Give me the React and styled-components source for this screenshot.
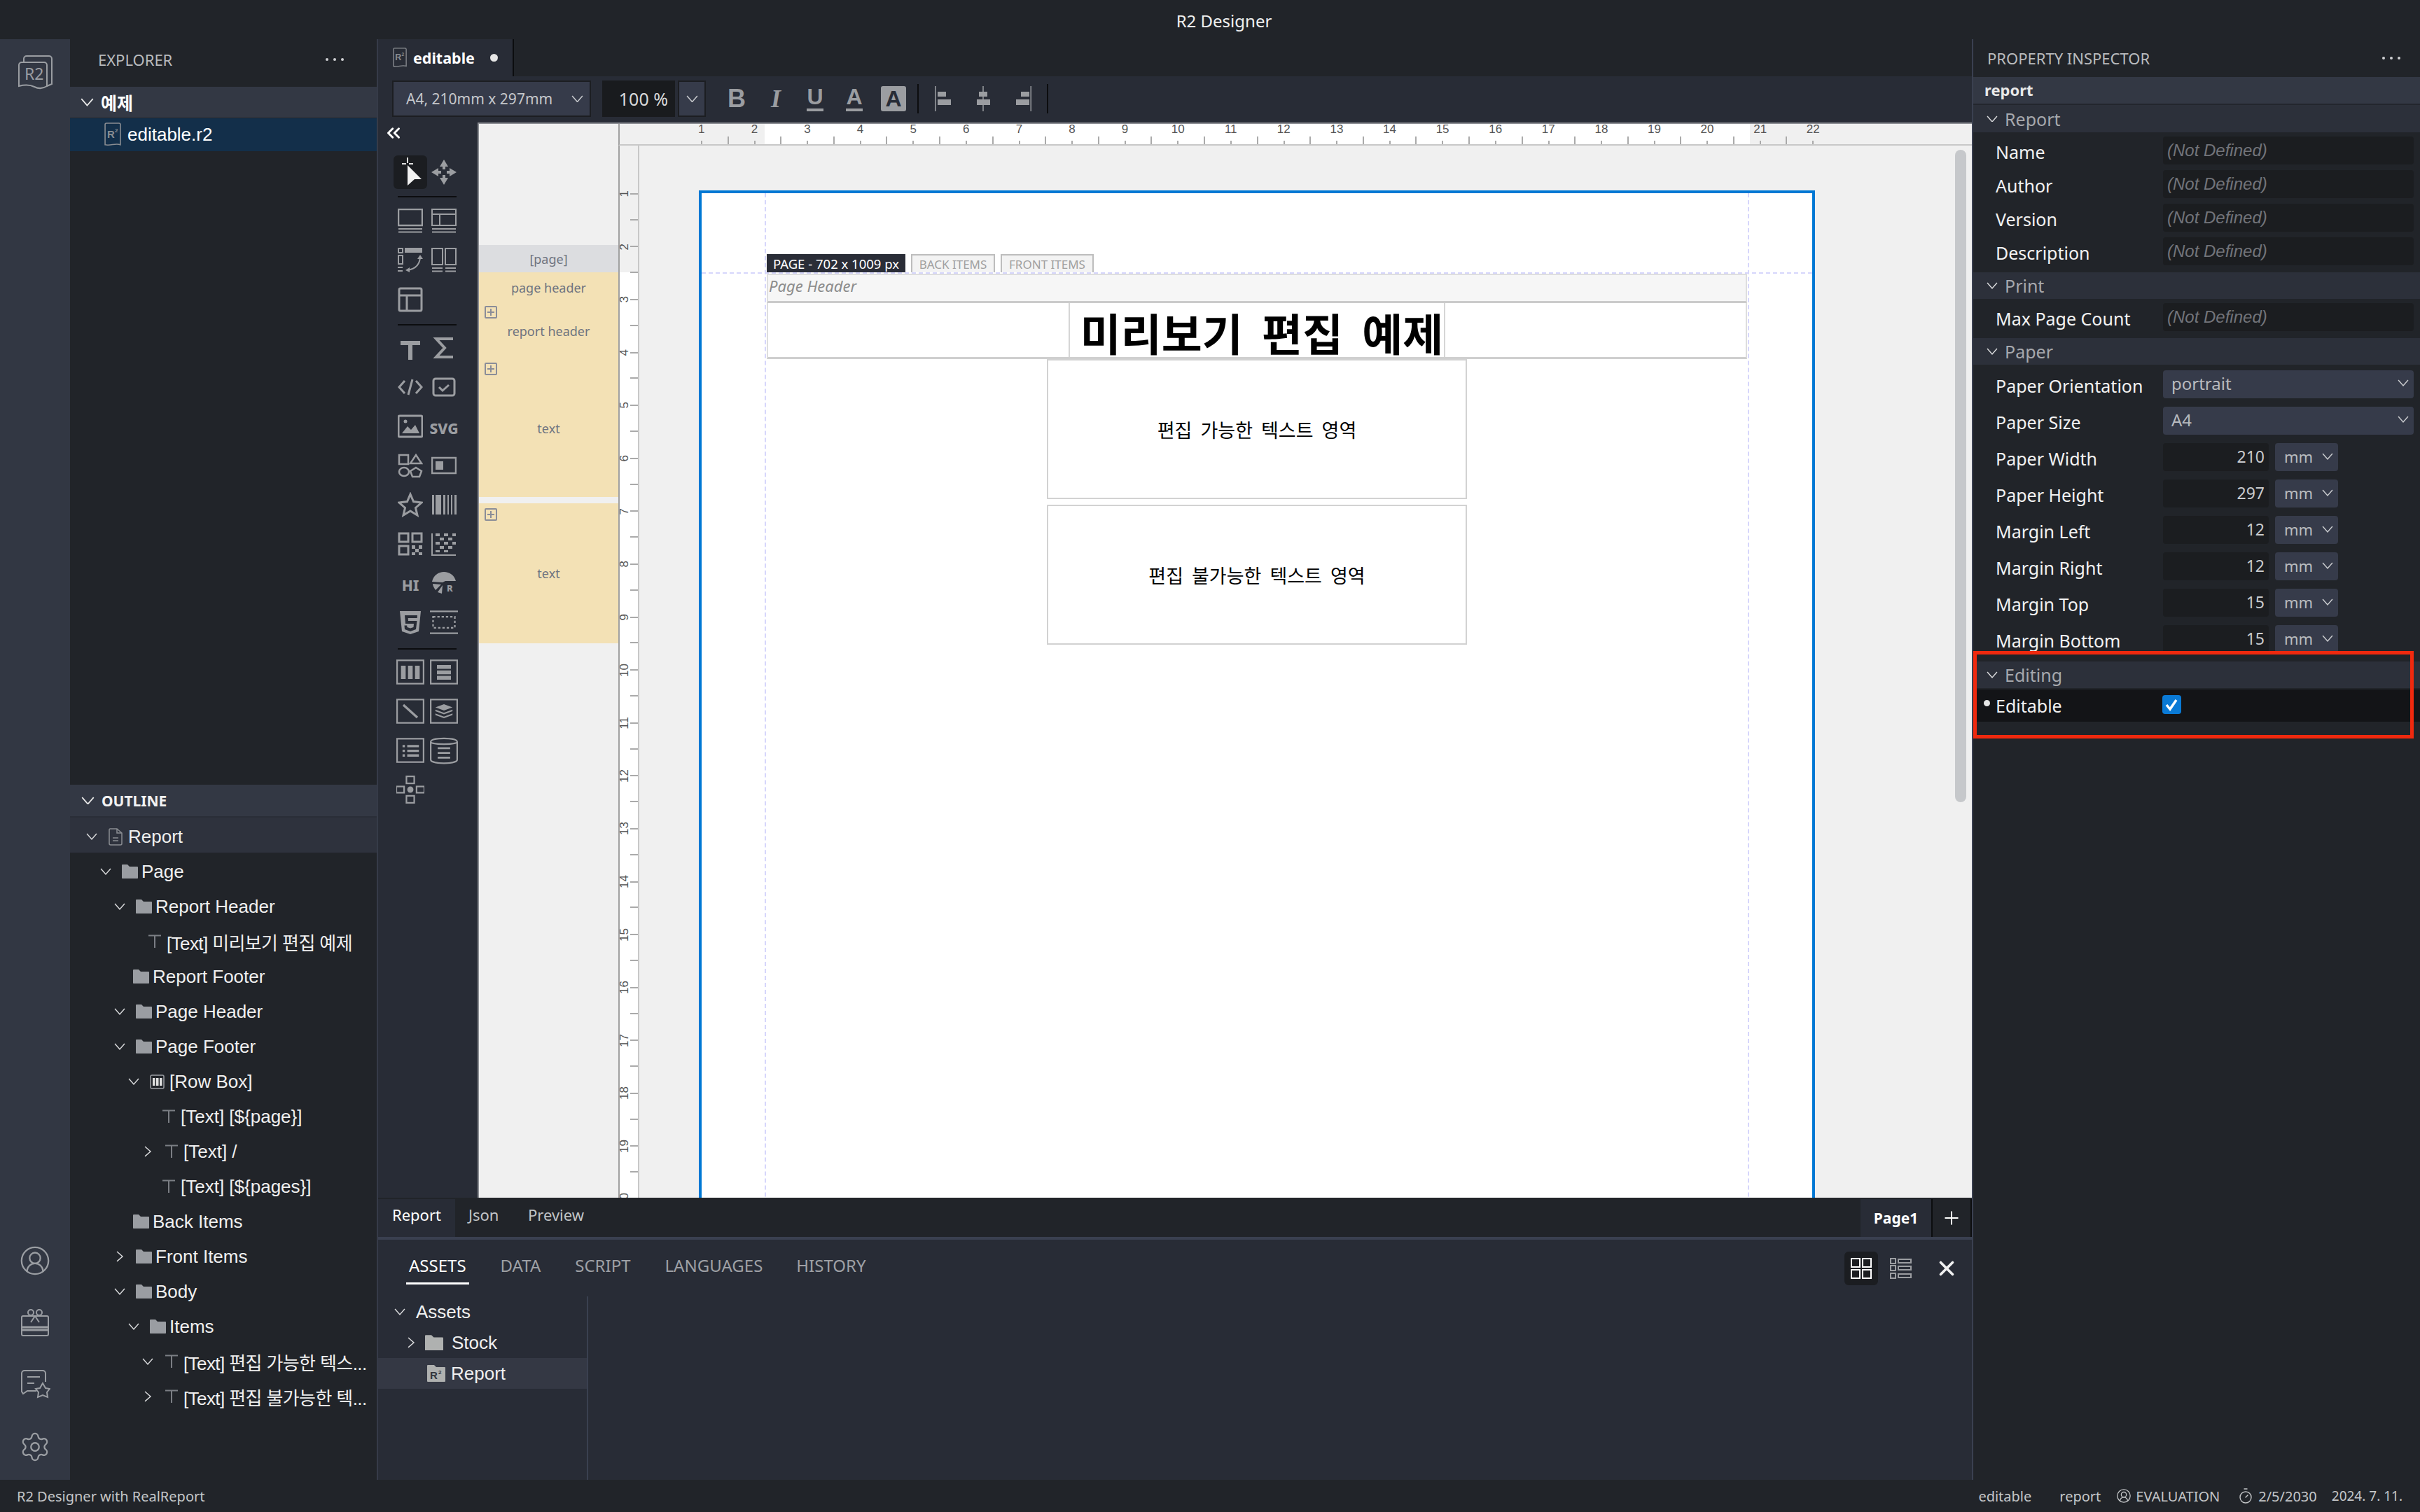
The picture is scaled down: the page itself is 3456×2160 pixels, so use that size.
import React from "react";
import styled, { createGlobalStyle } from "styled-components";
import { CircleUserRound, Settings, Plus, X, Timer, ChevronsLeft } from "lucide-react";

const UI = `"Noto Sans", "Noto Sans CJK KR", sans-serif`;
const TREE = `"Liberation Sans", "Noto Sans CJK KR", sans-serif`;
const GRAY = "#9b9da1";

const Global = createGlobalStyle`
  html, body { margin: 0; padding: 0; background: #212429; }
  * { box-sizing: border-box; }
`;

const App_ = styled.div`
  width: 3456px;
  height: 2160px;
  display: flex;
  flex-direction: column;
  overflow: hidden;
  background: #212429;
  font-family: ${UI};
  color: #eee;
`;

const TitleBar = styled.div`
  height: 56px;
  flex-shrink: 0;
  display: flex;
  align-items: center;
  justify-content: center;
  padding: 3px 0 0 40px;
  font-size: 24px;
  color: #f0f0f0;
`;

const Middle = styled.div`
  flex: 1;
  display: flex;
  min-height: 0;
`;

const ActivityBar = styled.div`
  width: 100px;
  flex-shrink: 0;
  background: #323743;
  display: flex;
  flex-direction: column;
  justify-content: space-between;
  align-items: center;
  padding: 22px 0 24px;
  color: #9a9da2;
`;

const ActivityGroup = styled.div`
  display: flex;
  flex-direction: column;
  align-items: center;
  gap: 46px;
`;

const Explorer = styled.div`
  width: 440px;
  flex-shrink: 0;
  display: flex;
  flex-direction: column;
  border-right: 2px solid #363b48;
`;

const PanelHead = styled.div`
  height: ${(p) => p.$h}px;
  flex-shrink: 0;
  display: flex;
  align-items: center;
  justify-content: space-between;
  padding: ${(p) => p.$pad};
  font-size: 22px;
  color: #b9bbbe;
`;

const Dots = styled.div`
  display: flex;
  gap: 7px;
  i {
    width: 4px;
    height: 4px;
    border-radius: 50%;
    background: #cfd0d3;
  }
`;

const FolderHead = styled.div`
  height: 45px;
  flex-shrink: 0;
  background: #333844;
  border-bottom: 1px solid #23262d;
  display: flex;
  align-items: center;
  padding-left: 15px;
  gap: 10px;
  font-size: 25px;
  font-weight: 700;
  font-family: "Noto Sans CJK KR", sans-serif;
  color: #fff;
`;

const FileRow = styled.div`
  height: 47px;
  flex-shrink: 0;
  background: #132f4a;
  display: flex;
  align-items: center;
  padding-left: 49px;
  gap: 9px;
  font-family: ${TREE};
  font-size: 26px;
  color: #fff;
`;

const FilesArea = styled.div`
  flex: 1;
`;

const OutlineHead = styled.div`
  height: 47px;
  flex-shrink: 0;
  background: #333844;
  border-bottom: 2px solid #2a2e37;
  display: flex;
  align-items: center;
  padding-left: 16px;
  gap: 10px;
  font-size: 21px;
  font-weight: 700;
  color: #f2f2f2;
`;

const OutlineArea = styled.div`
  height: 946px;
  flex-shrink: 0;
`;

const TreeRow = styled.div`
  height: 50px;
  display: flex;
  align-items: center;
  padding: 4px 0 0 ${(p) => p.$x}px;
  background: ${(p) => (p.$top ? "#2e323d" : "transparent")};
  font-family: ${TREE};
  font-size: 26px;
  letter-spacing: ${(p) => (p.$ko ? "-0.6px" : "0")};
  color: #f0f0f0;
  white-space: nowrap;
`;

const Twisty = styled.span`
  width: ${(p) => p.$w}px;
  flex-shrink: 0;
  display: flex;
  padding-left: 4px;
`;

const Glyph = styled.span`
  width: ${(p) => p.$w}px;
  flex-shrink: 0;
  display: flex;
  align-items: center;
`;

const Main = styled.div`
  flex: 1;
  min-width: 0;
  display: flex;
  flex-direction: column;
`;

const EditorTabs = styled.div`
  height: 53px;
  flex-shrink: 0;
  display: flex;
`;

const EditorTab = styled.div`
  width: 194px;
  background: #282c36;
  border-right: 2px solid #0c0d0f;
  display: flex;
  align-items: center;
  padding-left: 21px;
  gap: 9px;
  font-size: 21.5px;
  font-weight: 700;
  color: #fff;
  i {
    width: 11px;
    height: 11px;
    border-radius: 50%;
    background: #e6e6e6;
    margin-left: 13px;
  }
`;

const Toolbar = styled.div`
  height: 66px;
  flex-shrink: 0;
  background: #282c36;
  display: flex;
  align-items: center;
  padding-left: 20px;
  padding-bottom: 2px;
`;

const SizeSelect = styled.div`
  width: 284px;
  height: 52px;
  background: #363b4a;
  border: 2px solid #1c1e22;
  display: flex;
  align-items: center;
  justify-content: space-between;
  padding: 0 9px 0 18px;
  font-size: 21px;
  color: #c5c7cb;
  white-space: nowrap;
`;

const ZoomInput = styled.div`
  width: 104px;
  height: 52px;
  margin-left: 16px;
  background: #191b1e;
  display: flex;
  align-items: center;
  justify-content: flex-end;
  padding-right: 10px;
  font-size: 25px;
  color: #d8d9da;
`;

const ZoomArrow = styled.div`
  width: 40px;
  height: 52px;
  margin-left: 4px;
  background: #363b4a;
  border: 2px solid #1c1e22;
  display: flex;
  align-items: center;
  justify-content: center;
`;

const FormatBtn = styled.span`
  width: 56px;
  height: 36px;
  margin-left: ${(p) => p.$ml || 0}px;
  flex-shrink: 0;
  display: flex;
  align-items: center;
  justify-content: center;
  color: ${GRAY};
  font-family: ${(p) => (p.$serif ? '"Liberation Serif", serif' : '"Liberation Sans", sans-serif')};
  font-style: ${(p) => (p.$italic ? "italic" : "normal")};
  font-weight: 700;
  font-size: 36px;
`;

const BarLetter = styled.span`
  display: inline-block;
  line-height: 30px;
  height: 36px;
  font-size: 32px;
  border-bottom: 4px solid ${GRAY};
`;

const FilledLetter = styled.span`
  width: 36px;
  height: 36px;
  background: ${GRAY};
  border-radius: 3px;
  color: #282c36;
  font-size: 32px;
  display: flex;
  align-items: center;
  justify-content: center;
`;

const ToolSep = styled.span`
  width: 2px;
  height: 42px;
  background: #0c0d0f;
  margin: ${(p) => p.$m};
  flex-shrink: 0;
`;

const Workspace = styled.div`
  flex: 1;
  min-height: 0;
  display: flex;
`;

const ToolPanel = styled.div`
  width: 142px;
  flex-shrink: 0;
  background: #282c36;
  padding: 0 0 0 22px;
`;

const Collapse = styled.div`
  height: 47px;
  display: flex;
  align-items: center;
  color: #fff;
  margin-left: -15px;
  padding-bottom: 18px;
`;

const ToolGrid = styled.div`
  display: grid;
  grid-template-columns: 48px 48px;
  grid-auto-rows: 48px;
  row-gap: 8px;
`;

const Tool = styled.span`
  display: flex;
  align-items: center;
  justify-content: center;
  border-radius: 6px;
  background: ${(p) => (p.$active ? "#1b1d21" : "transparent")};
  color: ${GRAY};
  font-family: ${UI};
  font-weight: 800;
  font-size: 21px;
`;

const ToolDivider = styled.div`
  width: 84px;
  height: 2px;
  margin: ${(p) => p.$mt}px 0 ${(p) => p.$mb}px 6px;
  background: #0c0d0f;
`;

const BandPanel = styled.div`
  width: 201px;
  flex-shrink: 0;
  background: #f0f0f0;
  border-left: 2px solid #8b8d93;
  border-top: 2px solid #8b8d93;
  padding-top: 173px;
  font-size: 18px;
  color: #6f7480;
`;

const PageBand = styled.div`
  height: 39px;
  background: #dcdde0;
  display: flex;
  align-items: center;
  justify-content: center;
`;

const Band = styled.div`
  position: relative;
  height: ${(p) => p.$h}px;
  margin-top: ${(p) => p.$gap || 0}px;
  background: #f3e1b5;
  display: flex;
  align-items: center;
  justify-content: center;
`;

const BandPlus = styled.span`
  position: absolute;
  left: 8px;
  top: ${(p) => p.$top}px;
  width: 18px;
  height: 18px;
  border: 2px solid #8a8d98;
  border-radius: 2px;
  &::before, &::after {
    content: "";
    position: absolute;
    background: #8a8d98;
  }
  &::before { left: 2px; right: 2px; top: 6px; height: 2px; }
  &::after { left: 6px; width: 2px; top: 2px; bottom: 2px; }
`;

const Canvas = styled.div`
  flex: 1;
  min-width: 0;
  position: relative;
  display: flex;
  flex-direction: column;
  overflow: hidden;
  background: #f0f0f0;
  border-top: 2px solid #8b8d93;
`;

const TopRuler = styled.div`
  height: 31px;
  flex-shrink: 0;
  display: flex;
  padding-left: 79px;
  border-bottom: 2px solid #c8c8c8;
  border-left: 2px solid #a0a0a0;
  background: linear-gradient(to right, #f0f0f0 207px, #fff 207px, #fff 1614px, #f0f0f0 1614px);
`;

const TopCell = styled.div`
  position: relative;
  width: 75.6px;
  flex-shrink: 0;
  text-align: center;
  font-family: "Liberation Sans", sans-serif;
  font-size: 17px;
  line-height: 15px;
  color: #555;
  &::before {
    content: "";
    position: absolute;
    left: 37px;
    bottom: 0;
    width: 2px;
    height: 5px;
    background: #aaa;
  }
  &::after {
    content: "";
    display: ${(p) => (p.$last ? "none" : "block")};
    position: absolute;
    right: -1px;
    bottom: 0;
    width: 2px;
    height: 11px;
    background: #aaa;
  }
`;

const CanvasBody = styled.div`
  flex: 1;
  min-height: 0;
  display: flex;
`;

const LeftRuler = styled.div`
  width: 30px;
  flex-shrink: 0;
  padding-top: 31px;
  overflow: hidden;
  border-left: 2px solid #a0a0a0;
  border-right: 2px solid #c8c8c8;
  background: linear-gradient(to bottom, #f0f0f0 181px, #fff 181px);
`;

const LeftCell = styled.div`
  height: 75.6px;
  display: flex;
  align-items: center;
  justify-content: space-between;
  font-family: "Liberation Sans", sans-serif;
  font-size: 17px;
  line-height: 14px;
  color: #555;
  background: linear-gradient(#aaa, #aaa) right 0 bottom 0 / 11px 2px no-repeat;
  span {
    writing-mode: vertical-rl;
    transform: rotate(180deg);
  }
  &::after {
    content: "";
    width: 11px;
    height: 2px;
    background: #aaa;
  }
`;

const Scroller = styled.div`
  flex: 1;
  min-width: 0;
  padding: 64px 0 0 85px;
  overflow: hidden;
`;

const Sheet = styled.div`
  position: relative;
  width: 1594px;
  height: 2300px;
  background: #fff;
  border: 4px solid #0078d4;
  padding: 87px 93px 0;
`;

const GuideV = styled.span`
  position: absolute;
  top: 0;
  bottom: 0;
  ${(p) => p.$side}: 90px;
  border-left: 2px dashed #d6d6fb;
`;

const GuideH = styled.span`
  position: absolute;
  left: 0;
  right: 0;
  top: 113px;
  border-top: 2px dashed #d6d6fb;
`;

const ItemTabs = styled.div`
  height: 26px;
  display: flex;
  gap: 8px;
`;

const ItemTab = styled.div`
  width: ${(p) => p.$w}px;
  display: flex;
  align-items: center;
  justify-content: center;
  font-size: ${(p) => (p.$dark ? 18.5 : 17)}px;
  white-space: nowrap;
  background: ${(p) => (p.$dark ? "#2a2d37" : "#f3f3f3")};
  color: ${(p) => (p.$dark ? "#fff" : "#a0a0a0")};
  border: ${(p) => (p.$dark ? "none" : "2px solid #bdbdbd")};
  border-bottom: none;
`;

const PageHeaderBand = styled.div`
  position: relative;
  height: 42px;
  margin-top: 2px;
  background: #f6f6f6;
  border: 2px solid #dedede;
  border-bottom: 3px solid #cbcbcb;
  padding-left: 1px;
  font-size: 22px;
  font-style: italic;
  line-height: 31px;
  color: #8c8c8c;
`;

const ReportHeaderBand = styled.div`
  position: relative;
  height: 80px;
  background: #fff;
  border: 2px solid #dedede;
  border-top: none;
  border-bottom: 3px solid #cfcfcf;
  padding-left: 429px;
`;

const TitleBox = styled.div`
  width: 538px;
  height: 100%;
  border: solid #d6d6d6;
  border-width: 0 2px;
  display: flex;
  align-items: center;
  justify-content: center;
  padding: 4px 0 0 14px;
  font-family: "Noto Sans CJK KR", sans-serif;
  font-size: 63px;
  font-weight: 700;
  color: #000;
  word-spacing: 13px;
  white-space: nowrap;
`;

const TextBox = styled.div`
  position: relative;
  width: 600px;
  height: 200px;
  margin: ${(p) => p.$top}px 0 0 400px;
  border: 2px solid #d2d2d2;
  background: #fff;
  display: flex;
  align-items: center;
  justify-content: center;
  font-family: "Noto Sans CJK KR", sans-serif;
  font-size: 27px;
  font-weight: 400;
  color: #000;
  word-spacing: 6px;
`;

const ScrollThumb = styled.span`
  position: absolute;
  right: 8px;
  top: 37px;
  width: 16px;
  height: 932px;
  border-radius: 8px;
  background: #c6c8cb;
`;

const SheetTabs = styled.div`
  height: 56px;
  flex-shrink: 0;
  display: flex;
  align-items: flex-end;
  background: #212429;
`;

const SheetTab = styled.div`
  height: 54px;
  display: flex;
  align-items: center;
  padding-left: ${(p) => p.$pl}px;
  width: ${(p) => p.$w}px;
  background: ${(p) => (p.$active ? "#282c36" : "transparent")};
  color: ${(p) => (p.$active ? "#fff" : "#c2c4c7")};
  font-size: 22px;
  padding-bottom: 10px;
`;

const Spring = styled.div`
  flex: 1;
`;

const PageTab = styled.div`
  width: 103px;
  height: 54px;
  background: #282c36;
  border-right: 2px solid #0c0d0f;
  display: flex;
  align-items: center;
  justify-content: center;
  font-size: 21px;
  font-weight: 700;
  color: #fff;
`;

const AddTab = styled.div`
  width: 56px;
  height: 54px;
  border-right: 2px solid #0c0d0f;
  display: flex;
  align-items: center;
  justify-content: center;
  color: #fff;
`;

const BottomPanel = styled.div`
  height: 347px;
  flex-shrink: 0;
  background: #282c36;
  border-top: 4px solid #3a4050;
  display: flex;
  flex-direction: column;
`;

const BottomTabs = styled.div`
  height: 81px;
  flex-shrink: 0;
  display: flex;
  padding: 0 12px 0 40px;
`;

const BottomTab = styled.div`
  height: 64px;
  padding: 12px 4px 0;
  margin-right: ${(p) => p.$mr}px;
  display: flex;
  align-items: center;
  font-size: 24px;
  color: ${(p) => (p.$active ? "#fff" : "#9ea0a5")};
  border-bottom: 3px solid ${(p) => (p.$active ? "#fff" : "transparent")};
`;

const ViewBtn = styled.div`
  width: 48px;
  height: 48px;
  margin: 17px 0 0 ${(p) => p.$ml}px;
  border-radius: 6px;
  background: ${(p) => (p.$active ? "#1b1d21" : "transparent")};
  color: ${(p) => (p.$active ? "#fff" : GRAY)};
  display: flex;
  align-items: center;
  justify-content: center;
`;

const AssetArea = styled.div`
  flex: 1;
  min-height: 0;
  display: flex;
`;

const AssetTree = styled.div`
  width: 300px;
  border-right: 2px solid #3a4050;
`;

const AssetRow = styled.div`
  height: 44px;
  display: flex;
  align-items: center;
  padding-left: ${(p) => p.$pad}px;
  gap: ${(p) => p.$gap}px;
  background: ${(p) => (p.$sel ? "#343844" : "transparent")};
  font-family: ${TREE};
  font-size: 26px;
  color: #f0f0f0;
`;

const RightPanel = styled.div`
  position: relative;
  width: 640px;
  flex-shrink: 0;
  border-left: 2px solid #3a4050;
  overflow: hidden;
`;

const ReportTitle = styled.div`
  height: 40px;
  background: #333844;
  border-bottom: 2px solid #23262d;
  display: flex;
  align-items: center;
  padding: 0 0 3px 16px;
  font-size: 22px;
  font-weight: 700;
  color: #e8e8e8;
`;

const SectionHead = styled.div`
  height: ${(p) => p.$h || 38}px;
  background: #2c303a;
  display: flex;
  align-items: center;
  padding-left: 19px;
  gap: 10px;
  font-size: 25px;
  color: #a6a8ad;
`;

const SectionBody = styled.div`
  padding: ${(p) => p.$pad};
  display: flex;
  flex-direction: column;
  gap: ${(p) => p.$gap}px;
`;

const PropRow = styled.div`
  height: 40px;
  display: flex;
  align-items: center;
`;

const PropLabel = styled.div`
  width: 271px;
  flex-shrink: 0;
  padding-left: 32px;
  padding-top: 3px;
  font-size: 25px;
  color: #f2f2f2;
  white-space: nowrap;
`;

const TextField = styled.div`
  width: 358px;
  height: 40px;
  background: #1b1d20;
  border-radius: 4px;
  display: flex;
  align-items: center;
  padding-left: 6px;
  font-family: "Liberation Sans", sans-serif;
  font-style: italic;
  font-size: 24px;
  color: #72747a;
`;

const SelectField = styled.div`
  width: 358px;
  height: 40px;
  background: #363b4a;
  border-radius: 4px;
  display: flex;
  align-items: center;
  justify-content: space-between;
  padding: 0 7px 4px 12px;
  font-size: 24px;
  color: #b9bbbf;
`;

const NumField = styled.div`
  width: 151px;
  height: 40px;
  background: #1b1d20;
  border-radius: 4px;
  display: flex;
  align-items: center;
  justify-content: flex-end;
  padding: 0 6px 2px 0;
  font-size: 23px;
  color: #c9cbce;
`;

const UnitField = styled.div`
  width: 90px;
  height: 40px;
  margin-left: 9px;
  background: #363b4a;
  border-radius: 4px;
  display: flex;
  align-items: center;
  justify-content: space-between;
  padding: 0 7px 2px 13px;
  font-size: 22px;
  color: #b9bbbf;
`;

const EditableRow = styled.div`
  height: 46px;
  margin-top: 2px;
  background: #131417;
  display: flex;
  align-items: center;
  position: relative;
  padding-bottom: 4px;
  &::before {
    content: "";
    position: absolute;
    left: 15px;
    top: 15px;
    width: 9px;
    height: 9px;
    border-radius: 50%;
    background: #e6e6e6;
  }
`;

const CheckBox = styled.span`
  width: 27px;
  height: 27px;
  margin-left: -1px;
  border-radius: 4px;
  background: #0a7ad6;
  display: flex;
  align-items: center;
  justify-content: center;
`;

const RedBox = styled.div`
  position: absolute;
  left: 0;
  top: 874px;
  width: 629px;
  height: 125px;
  border: 5px solid #f0290e;
  pointer-events: none;
`;

const StatusBar = styled.div`
  height: 46px;
  flex-shrink: 0;
  display: flex;
  align-items: center;
  padding: 0 25px 0 24px;
  font-size: 20px;
  color: #c4c6c8;
`;

const StatusItem = styled.span`
  display: flex;
  align-items: center;
  gap: 6px;
  margin-left: ${(p) => p.$ml || 0}px;
  font-size: ${(p) => p.$fs || 20}px;
`;

/* icons */

const Chevron = ({ size = 16, right, color = "#d8d9db" }) => (
  <svg
    width={size}
    height={size * 0.62}
    viewBox="0 0 16 10"
    fill="none"
    stroke={color}
    strokeWidth="1.5"
    style={right ? { transform: "rotate(-90deg)" } : undefined}
  >
    <polyline points="1,1 8,9 15,1" />
  </svg>
);

const R2File = ({ color = "#8a8d92", w = 24 }) => (
  <svg width={w} height={w * 1.45} viewBox="0 0 24 35" fill="none">
    <path d="M3 1h18a2 2 0 0 1 2 2v29c-7-3-14 2-22 0V3a2 2 0 0 1 2-2z" stroke={color} strokeWidth="1.6" />
    <text x="4" y="22" fontFamily="Liberation Sans" fontWeight="700" fontSize="15" fill={color}>R</text>
    <text x="15" y="14" fontFamily="Liberation Sans" fontWeight="700" fontSize="8" fill={color}>2</text>
  </svg>
);

const Logo = () => (
  <svg width="50" height="50" viewBox="0 0 50 50" fill="none" stroke="#9a9da2" strokeWidth="2">
    <path d="M2 15a4 4 0 0 1 4-4h32a4 4 0 0 1 4 4v30c-6 4-12 4-18 1s-14-3-22-1z" />
    <path d="M9 11V6a4 4 0 0 1 4-4h32a4 4 0 0 1 4 4v36l-7 3" />
    <text x="10" y="36" fontFamily="Noto Sans" fontSize="23" fill="#9a9da2" stroke="none">R2</text>
  </svg>
);

const Folder = ({ color = "#9a9da2", w = 23 }) => (
  <svg width={w} height={w * 0.88} viewBox="0 0 23 20">
    <path fill={color} d="M0 1a1 1 0 0 1 1-1h7l3 3h11a1 1 0 0 1 1 1v15a1 1 0 0 1-1 1H1a1 1 0 0 1-1-1z" />
  </svg>
);

const ReportFolder = () => (
  <svg width="26" height="24" viewBox="0 0 26 24">
    <path fill="#afb1b0" d="M0 1a1 1 0 0 1 1-1h9l3 3h12a1 1 0 0 1 1 1v19a1 1 0 0 1-1 1H1a1 1 0 0 1-1-1z" />
    <text x="4" y="20" fontFamily="Liberation Sans" fontWeight="700" fontSize="15" fill="#33363d">R</text>
    <text x="16" y="13" fontFamily="Liberation Sans" fontWeight="700" fontSize="8" fill="#33363d">2</text>
  </svg>
);

const ThinT = () => (
  <svg width="18" height="20" viewBox="0 0 18 20" fill="none" stroke="#7b7e84" strokeWidth="2">
    <path d="M0 1.5h18M9 1.5V19" />
  </svg>
);

const DocIcon = () => (
  <svg width="20" height="25" viewBox="0 0 20 25" fill="none" stroke="#8a8d92" strokeWidth="1.5">
    <path d="M2 1h10l7 6v15a2 2 0 0 1-2 2H3a2 2 0 0 1-2-2V2zM12 1v6h7M6 14h8M6 18h8" />
  </svg>
);

const RowBoxIcon = () => (
  <svg width="21" height="21" viewBox="0 0 21 21" fill="none" stroke="#9a9da2" strokeWidth="1.5">
    <rect x="1" y="1" width="19" height="19" rx="2" />
    <path fill="#e0e0e0" stroke="none" d="M4 5h3.5v11H4zM9 5h3.5v11H9zM14 5h3.5v11H14z" />
  </svg>
);

const Gift = () => (
  <svg width="42" height="40" viewBox="0 0 42 40" fill="none" stroke="#9a9da2" strokeWidth="2">
    <rect x="2" y="10" width="38" height="28" rx="2" />
    <path d="M2 26h38M2 30h38" strokeWidth="3" />
    <path d="M21 10l-6 9M21 10l6 9" />
    <circle cx="15" cy="5" r="4" />
    <circle cx="27" cy="5" r="4" />
  </svg>
);

const ChatStar = () => (
  <svg width="44" height="42" viewBox="0 0 44 42" fill="none" stroke="#9a9da2" strokeWidth="2">
    <path d="M24 31H11l-6 4-2-3V6a4 4 0 0 1 4-4h26a4 4 0 0 1 4 4v12" />
    <path d="M11 11h18M11 20h10" />
    <path d="M33 20l4 7 6 1-4 5 1 7-7-3-7 3 1-7-4-5 6-1z" />
  </svg>
);

const Tile = ({ children, size = 36, fill = "none", sw = 2.5 }) => (
  <svg width={size} height={size} viewBox="0 0 36 36" fill={fill} stroke={GRAY} strokeWidth={sw}>
    {children}
  </svg>
);

const LINES = <path d="M1 29h34M1 33.5h34" strokeWidth="2" />;
const solid = { fill: GRAY, stroke: "none" };

const ICONS = {
  band: (
    <Tile>
      <rect x="1" y="1" width="34" height="23" />
      {LINES}
    </Tile>
  ),
  tableBand: (
    <Tile sw={2}>
      <rect x="1" y="1" width="34" height="23" />
      <path d="M1 8h34M12 8v16" />
      {LINES}
    </Tile>
  ),
  pivot: (
    <Tile sw={2}>
      <rect x="1" y="1" width="6" height="6" />
      <rect x="10" y="0" width="25" height="7" {...solid} />
      <rect x="1" y="11" width="6" height="12" />
      <path d="M0 28h7M0 33h7" />
      <path d="M32 12c0 12-6 18-18 20" />
      <path d="M28 16l4-6 4 6zM17 28l-6 4 6 3z" {...solid} />
    </Tile>
  ),
  twoBand: (
    <Tile sw={2}>
      <rect x="1" y="1" width="15" height="23" />
      <rect x="20" y="1" width="15" height="23" />
      <path d="M1 29h15M20 29h15M1 33.5h15M20 33.5h15" />
    </Tile>
  ),
  table: (
    <Tile sw={3}>
      <rect x="2" y="2" width="32" height="32" rx="2" />
      <path d="M2 12h32M13 12v22" />
    </Tile>
  ),
  sum: (
    <Tile sw={4}>
      <path d="M31 5H7l12 13L7 31h24" />
    </Tile>
  ),
  code: (
    <Tile sw={3}>
      <path d="M10 9l-8 9 8 9M26 9l8 9-8 9M21 7l-6 22" />
    </Tile>
  ),
  check: (
    <Tile sw={3}>
      <rect x="3" y="6" width="30" height="24" rx="3" />
      <path d="M11 18l5 5 9-8" />
    </Tile>
  ),
  image: (
    <Tile sw={3}>
      <rect x="1" y="3" width="34" height="30" rx="2" />
      <path d="M6 28l8-10 5 5 6-7 6 12z" {...solid} />
      <circle cx="11" cy="11" r="2.5" {...solid} />
    </Tile>
  ),
  shapes: (
    <Tile sw={2.5}>
      <rect x="2" y="3" width="13" height="13" />
      <path d="M26 3l8 12H18z" />
      <ellipse cx="9" cy="27" rx="7" ry="6" />
      <path d="M26 21l8 5-3 8H21l-3-8z" />
    </Tile>
  ),
  slider: (
    <Tile sw={2.5}>
      <rect x="1" y="7" width="34" height="22" />
      <rect x="6" y="12" width="11" height="12" {...solid} />
    </Tile>
  ),
  star: (
    <Tile sw={3}>
      <path d="M18 3l4.500 10.500L34 15l-8.500 7.500L28 33l-10-6-10 6 2.500-10.500L2 15l11.500-1.500z" />
    </Tile>
  ),
  barcode: (
    <Tile>
      <path {...solid} d="M1 4h3v28H1zM6 4h8v28H6zM17 4h3v28h-3zM23 4h2v28h-2zM28 4h2v28h-2zM33 4h3v28h-3z" />
    </Tile>
  ),
  qr: (
    <Tile sw={3}>
      <rect x="2" y="3" width="13" height="12" />
      <rect x="21" y="3" width="13" height="12" />
      <rect x="2" y="21" width="13" height="12" />
      <path {...solid} d="M20 20h5v5h-5zM30 20h5v5h-5zM25 25h5v5h-5zM20 30h5v4h-5zM30 30h5v4h-5z" />
    </Tile>
  ),
  matrix: (
    <Tile sw={2}>
      <path d="M1 3v31h34" />
      <path {...solid} d="M6 3h6v4H6zM18 3h6v4h-6zM30 3h5v4h-5zM12 9h6v4h-6zM24 9h6v4h-6zM6 15h6v4H6zM18 15h6v4h-6zM30 15h5v4h-5zM12 21h6v4h-6zM24 21h6v4h-6zM6 27h6v3H6zM18 27h6v3h-6z" />
    </Tile>
  ),
  chart: (
    <Tile sw={0}>
      <path {...solid} d="M1 16C3 7 10 2 18 2s15 5 17 13L20 15l-4 2L1 16zM2 19l12 1-8 8c-2-3-4-6-4-9zM16 21l-1 12-6-2z" />
      <text x="22" y="30" fontFamily="Noto Sans" fontWeight="800" fontSize="13" fill={GRAY} stroke="none">R</text>
    </Tile>
  ),
  html: (
    <Tile sw={0}>
      <path {...solid} fillRule="evenodd" d="M3 2h30l-3 29-12 4-12-4zM10 8l1 12h12l-.5 5-4.500 1.500L13.500 25l-.3-2.500H9.500L10 28l8 3 8-3 1.500-12H15l-.3-4h13l.3-4z" />
    </Tile>
  ),
  frame: (
    <Tile size={40} sw={2}>
      <path d="M0 4h36M0 32h36" />
      <rect x="4" y="11" width="28" height="14" strokeDasharray="3 2.500" />
    </Tile>
  ),
  row: (
    <Tile size={40} sw={2}>
      <rect x="1" y="3" width="34" height="30" />
      <path {...solid} d="M6 10h6v17H6zM15 10h6v17h-6zM24 10h6v17h-6z" />
    </Tile>
  ),
  col: (
    <Tile size={40} sw={2}>
      <rect x="1" y="3" width="34" height="30" />
      <path {...solid} d="M9 9h18v5H9zM9 16h18v5H9zM9 23h18v5H9z" />
    </Tile>
  ),
  line: (
    <Tile size={40} sw={2}>
      <rect x="1" y="3" width="34" height="30" />
      <path d="M9 10l18 16" strokeWidth="3" />
    </Tile>
  ),
  stack: (
    <Tile size={40} sw={2}>
      <rect x="1" y="3" width="34" height="30" />
      <path {...solid} d="M18 9l11 4-11 4-11-4zM7 16l11 4 11-4v2l-11 4-11-4zM7 21l11 4 11-4v2l-11 4-11-4z" />
    </Tile>
  ),
  list: (
    <Tile size={40} sw={2}>
      <rect x="1" y="3" width="34" height="30" />
      <path {...solid} d="M8 11h3v3H8zM8 17h3v3H8zM8 23h3v3H8zM14 11h15v3H14zM14 17h15v3H14zM14 23h15v3H14z" />
    </Tile>
  ),
  db: (
    <Tile size={40} sw={2}>
      <path d="M1 7c0-6 34-6 34 0v23c0 6-34 6-34 0zM1 7c0 4 34 4 34 0" />
      <path {...solid} d="M10 14h16v2.500H10zM10 20h16v2.500H10zM10 26h16v2.500H10z" />
    </Tile>
  ),
  flex: (
    <Tile size={40} sw={2}>
      <rect x="13" y="1" width="10" height="9" />
      <rect x="13" y="26" width="10" height="9" />
      <rect x="0" y="14" width="10" height="8" />
      <rect x="26" y="14" width="10" height="8" />
      <circle cx="18" cy="18" r="4" {...solid} />
    </Tile>
  ),
};

const SelectIcon = () => (
  <svg width="36" height="42" viewBox="0 0 36 42" fill="none">
    <path d="M14 0v8M6 9h6M16 9h6" stroke="#ddd" strokeWidth="2" />
    <path d="M14 11l20 20H24l-10 9z" fill="#f2f2f2" />
  </svg>
);

const MoveIcon = () => (
  <svg width="36" height="36" viewBox="0 0 36 36">
    <path fill={GRAY} d="M18 0l6 10h-4v4h-4v-4h-4zM18 36l-6-10h4v-4h4v4h4zM0 18l10-6v4h4v4h-4v4zM36 18l-10 6v-4h-4v-4h4v-4z" />
  </svg>
);

const ALIGN = {
  l: { line: 1, small: 5, big: 5 },
  c: { line: 13.25, small: 8, big: 5 },
  r: { line: 25.5, small: 12, big: 5 },
};

const AlignIcon = ({ pos }) => {
  const a = ALIGN[pos];
  return (
    <svg width="28" height="36" viewBox="0 0 28 36">
      <rect x={a.line} y="0" width="1.500" height="36" fill={GRAY} />
      <rect x={a.small} y="8" width="12" height="7" fill={GRAY} />
      <rect x={a.big} y="19" width="19" height="8" fill={GRAY} />
    </svg>
  );
};

const GRID_A = ["band", "tableBand", "pivot", "twoBand", "table"];
const GRID_C = ["row", "col", "line", "stack", "list", "db", "flex"];
const INSERT = [
  <svg key="t" width="30" height="30" viewBox="0 0 30 30"><path fill={GRAY} d="M1 2h28v6H18v21h-6V8H1z" /></svg>,
  <span key="sum">{ICONS.sum}</span>,
  <span key="code">{ICONS.code}</span>,
  <span key="chk">{ICONS.check}</span>,
  <span key="img">{ICONS.image}</span>,
  "SVG",
  <span key="sh">{ICONS.shapes}</span>,
  <span key="sl">{ICONS.slider}</span>,
  <span key="st">{ICONS.star}</span>,
  <span key="bc">{ICONS.barcode}</span>,
  <span key="qr">{ICONS.qr}</span>,
  <span key="mx">{ICONS.matrix}</span>,
  "HI",
  <span key="ch">{ICONS.chart}</span>,
  <span key="h5">{ICONS.html}</span>,
  <span key="fr">{ICONS.frame}</span>,
];

const OUTLINE = [
  { x: 19, open: true, kind: "doc", label: "Report", top: true },
  { x: 39, open: true, kind: "folder", label: "Page" },
  { x: 59, open: true, kind: "folder", label: "Report Header" },
  { x: 112, kind: "text", label: "[Text] 미리보기 편집 예제", ko: true },
  { x: 90, kind: "folder", label: "Report Footer" },
  { x: 59, open: true, kind: "folder", label: "Page Header" },
  { x: 59, open: true, kind: "folder", label: "Page Footer" },
  { x: 79, open: true, kind: "row", label: "[Row Box]" },
  { x: 132, kind: "text", label: "[Text] [${page}]" },
  { x: 99, closed: true, kind: "text", label: "[Text] /" },
  { x: 132, kind: "text", label: "[Text] [${pages}]" },
  { x: 90, kind: "folder", label: "Back Items" },
  { x: 59, closed: true, kind: "folder", label: "Front Items" },
  { x: 59, open: true, kind: "folder", label: "Body" },
  { x: 79, open: true, kind: "folder", label: "Items" },
  { x: 99, open: true, kind: "text", label: "[Text] 편집 가능한 텍스...", ko: true },
  { x: 99, closed: true, kind: "text", label: "[Text] 편집 불가능한 텍...", ko: true },
];

const KINDS = {
  doc: { twisty: 36, w: 28, icon: <DocIcon /> },
  folder: { twisty: 35, w: 28, icon: <Folder /> },
  text: { twisty: 37, w: 26, icon: <ThinT /> },
  row: { twisty: 35, w: 28, icon: <RowBoxIcon /> },
};

const Outline = () =>
  OUTLINE.map((r) => {
    const k = KINDS[r.kind];
    return (
      <TreeRow key={r.label} $x={r.x} $top={r.top} $ko={r.ko}>
        {(r.open || r.closed) && (
          <Twisty $w={k.twisty}>
            <Chevron size={16} right={r.closed} />
          </Twisty>
        )}
        <Glyph $w={k.w}>{k.icon}</Glyph>
        {r.label}
      </TreeRow>
    );
  });

const Field = ({ label, children }) => (
  <PropRow>
    <PropLabel>{label}</PropLabel>
    {children}
  </PropRow>
);

const Unit = () => (
  <UnitField>
    mm
    <Chevron size={16} color="#c9cbce" />
  </UnitField>
);

const TopRulerCells = () =>
  Array.from({ length: 22 }, (_, i) => (
    <TopCell key={i} $last={i === 21}>
      {i + 1}
    </TopCell>
  ));

const LeftRulerCells = () =>
  Array.from({ length: 20 }, (_, i) => (
    <LeftCell key={i}>
      <span>{i + 1}</span>
    </LeftCell>
  ));

export default function App() {
  return (
    <App_>
      <Global />
      <TitleBar>R2 Designer</TitleBar>
      <Middle>
        <ActivityBar>
          <Logo />
          <ActivityGroup>
            <CircleUserRound size={46} strokeWidth={1.2} />
            <Gift />
            <ChatStar />
            <Settings size={46} strokeWidth={1.2} />
          </ActivityGroup>
        </ActivityBar>

        <Explorer>
          <PanelHead $h={68} $pad="0 47px 10px 40px">
            EXPLORER
            <Dots><i /><i /><i /></Dots>
          </PanelHead>
          <FolderHead>
            <Chevron size={19} color="#e8e8e8" />
            예제
          </FolderHead>
          <FileRow>
            <R2File />
            editable.r2
          </FileRow>
          <FilesArea />
          <OutlineHead>
            <Chevron size={19} color="#e8e8e8" />
            OUTLINE
          </OutlineHead>
          <OutlineArea>
            <Outline />
          </OutlineArea>
        </Explorer>

        <Main>
          <EditorTabs>
            <EditorTab>
              <R2File w={20} />
              editable
              <i />
            </EditorTab>
          </EditorTabs>
          <Toolbar>
            <SizeSelect>
              A4, 210mm x 297mm
              <Chevron size={17} color="#c5c7cb" />
            </SizeSelect>
            <ZoomInput>100 %</ZoomInput>
            <ZoomArrow>
              <Chevron size={17} color="#c5c7cb" />
            </ZoomArrow>
            <FormatBtn $ml={16}>B</FormatBtn>
            <FormatBtn $serif $italic>I</FormatBtn>
            <FormatBtn><BarLetter>U</BarLetter></FormatBtn>
            <FormatBtn><BarLetter>A</BarLetter></FormatBtn>
            <FormatBtn><FilledLetter>A</FilledLetter></FormatBtn>
            <ToolSep $m="0 8px 0 6px" />
            <FormatBtn><AlignIcon pos="l" /></FormatBtn>
            <FormatBtn><AlignIcon pos="c" /></FormatBtn>
            <FormatBtn><AlignIcon pos="r" /></FormatBtn>
            <ToolSep $m="0 0 0 7px" />
          </Toolbar>
          <Workspace>
            <ToolPanel>
              <Collapse><ChevronsLeft size={30} strokeWidth={2.4} /></Collapse>
              <ToolGrid>
                <Tool $active><SelectIcon /></Tool>
                <Tool><MoveIcon /></Tool>
              </ToolGrid>
              <ToolDivider $mt={10} $mb={10} />
              <ToolGrid>
                {GRID_A.map((k) => (
                  <Tool key={k}>{ICONS[k]}</Tool>
                ))}
              </ToolGrid>
              <ToolDivider $mt={11} $mb={11} />
              <ToolGrid>
                {INSERT.map((c, i) => (
                  <Tool key={i}>{c}</Tool>
                ))}
              </ToolGrid>
              <ToolDivider $mt={10} $mb={8} />
              <ToolGrid>
                {GRID_C.map((k) => (
                  <Tool key={k}>{ICONS[k]}</Tool>
                ))}
              </ToolGrid>
            </ToolPanel>

            <BandPanel>
              <PageBand>[page]</PageBand>
              <Band $h={44}>page header</Band>
              <Band $h={80}>
                <BandPlus $top={4} />
                report header
              </Band>
              <Band $h={197}>
                <BandPlus $top={5} />
                text
              </Band>
              <Band $h={200} $gap={9}>
                <BandPlus $top={7} />
                text
              </Band>
            </BandPanel>

            <Canvas>
              <TopRuler>
                <TopRulerCells />
              </TopRuler>
              <CanvasBody>
                <LeftRuler>
                  <LeftRulerCells />
                </LeftRuler>
                <Scroller>
                  <Sheet>
                    <GuideV $side="left" />
                    <GuideV $side="right" />
                    <GuideH />
                    <ItemTabs>
                      <ItemTab $dark $w={198}>PAGE - 702 x 1009 px</ItemTab>
                      <ItemTab $w={120}>BACK ITEMS</ItemTab>
                      <ItemTab $w={133}>FRONT ITEMS</ItemTab>
                    </ItemTabs>
                    <PageHeaderBand>Page Header</PageHeaderBand>
                    <ReportHeaderBand>
                      <TitleBox>미리보기 편집 예제</TitleBox>
                    </ReportHeaderBand>
                    <TextBox $top={0}>편집 가능한 텍스트 영역</TextBox>
                    <TextBox $top={8}>편집 불가능한 텍스트 영역</TextBox>
                  </Sheet>
                </Scroller>
              </CanvasBody>
              <ScrollThumb />
            </Canvas>
          </Workspace>

          <SheetTabs>
            <SheetTab $active $w={110} $pl={20}>Report</SheetTab>
            <SheetTab $w={104} $pl={19}>Json</SheetTab>
            <SheetTab $w={120} $pl={0}>Preview</SheetTab>
            <Spring />
            <PageTab>Page1</PageTab>
            <AddTab><Plus size={30} strokeWidth={1.6} /></AddTab>
          </SheetTabs>
          <BottomPanel>
            <BottomTabs>
              <BottomTab $active $mr={41}>ASSETS</BottomTab>
              <BottomTab $mr={41}>DATA</BottomTab>
              <BottomTab $mr={41}>SCRIPT</BottomTab>
              <BottomTab $mr={40}>LANGUAGES</BottomTab>
              <BottomTab $mr={0}>HISTORY</BottomTab>
              <Spring />
              <ViewBtn $active $ml={0}>
                <svg width="30" height="30" viewBox="0 0 30 30" fill="none" stroke="currentColor" strokeWidth="2">
                  <rect x="1" y="1" width="12" height="12" />
                  <rect x="17" y="1" width="12" height="12" />
                  <rect x="1" y="17" width="12" height="12" />
                  <rect x="17" y="17" width="12" height="12" />
                </svg>
              </ViewBtn>
              <ViewBtn $ml={8}>
                <svg width="31" height="30" viewBox="0 0 31 30" fill="none" stroke="currentColor" strokeWidth="2">
                  <rect x="1" y="1" width="7" height="7" />
                  <rect x="12" y="2" width="18" height="5" />
                  <rect x="1" y="11" width="7" height="7" />
                  <rect x="12" y="12" width="18" height="5" />
                  <rect x="1" y="22" width="7" height="7" />
                  <rect x="12" y="23" width="18" height="5" />
                </svg>
              </ViewBtn>
              <ViewBtn $ml={18}>
                <X size={34} color="#f0f0f0" strokeWidth={2.6} />
              </ViewBtn>
            </BottomTabs>
            <AssetArea>
              <AssetTree>
                <AssetRow $pad={23} $gap={15}>
                  <Chevron size={16} />
                  Assets
                </AssetRow>
                <AssetRow $pad={39} $gap={12}>
                  <Chevron size={16} right />
                  <Folder color="#afb1b0" w={26} />
                  Stock
                </AssetRow>
                <AssetRow $sel $pad={70} $gap={8}>
                  <ReportFolder />
                  Report
                </AssetRow>
              </AssetTree>
            </AssetArea>
          </BottomPanel>
        </Main>

        <RightPanel>
          <PanelHead $h={54} $pad="0 28px 0 20px">
            PROPERTY INSPECTOR
            <Dots><i /><i /><i /></Dots>
          </PanelHead>
          <ReportTitle>report</ReportTitle>
          <SectionHead $h={39}>
            <Chevron size={16} />
            Report
          </SectionHead>
          <SectionBody $pad="6px 0 10px" $gap={8}>
            <Field label="Name"><TextField>(Not Defined)</TextField></Field>
            <Field label="Author"><TextField>(Not Defined)</TextField></Field>
            <Field label="Version"><TextField>(Not Defined)</TextField></Field>
            <Field label="Description"><TextField>(Not Defined)</TextField></Field>
          </SectionBody>
          <SectionHead>
            <Chevron size={16} />
            Print
          </SectionHead>
          <SectionBody $pad="6px 0 10px" $gap={8}>
            <Field label="Max Page Count"><TextField>(Not Defined)</TextField></Field>
          </SectionBody>
          <SectionHead>
            <Chevron size={16} />
            Paper
          </SectionHead>
          <SectionBody $pad="8px 0 12px" $gap={12}>
            <Field label="Paper Orientation">
              <SelectField>portrait<Chevron size={16} color="#c9cbce" /></SelectField>
            </Field>
            <Field label="Paper Size">
              <SelectField>A4<Chevron size={16} color="#c9cbce" /></SelectField>
            </Field>
            <Field label="Paper Width"><NumField>210</NumField><Unit /></Field>
            <Field label="Paper Height"><NumField>297</NumField><Unit /></Field>
            <Field label="Margin Left"><NumField>12</NumField><Unit /></Field>
            <Field label="Margin Right"><NumField>12</NumField><Unit /></Field>
            <Field label="Margin Top"><NumField>15</NumField><Unit /></Field>
            <Field label="Margin Bottom"><NumField>15</NumField><Unit /></Field>
          </SectionBody>
          <SectionHead>
            <Chevron size={16} />
            Editing
          </SectionHead>
          <EditableRow>
            <PropLabel>Editable</PropLabel>
            <CheckBox>
              <svg width="19" height="19" viewBox="0 0 19 19" fill="none" stroke="#fff" strokeWidth="3.5">
                <path d="M2 10l5 6 9-13" />
              </svg>
            </CheckBox>
          </EditableRow>
          <RedBox />
        </RightPanel>
      </Middle>
      <StatusBar>
        R2 Designer with RealReport
        <Spring />
        <StatusItem>editable</StatusItem>
        <StatusItem $ml={40}>report</StatusItem>
        <StatusItem $ml={22}><CircleUserRound size={22} strokeWidth={1.4} />EVALUATION</StatusItem>
        <StatusItem $ml={25}><Timer size={24} strokeWidth={1.4} />2/5/2030</StatusItem>
        <StatusItem $ml={21} $fs={19}>2024. 7. 11.</StatusItem>
      </StatusBar>
    </App_>
  );
}
